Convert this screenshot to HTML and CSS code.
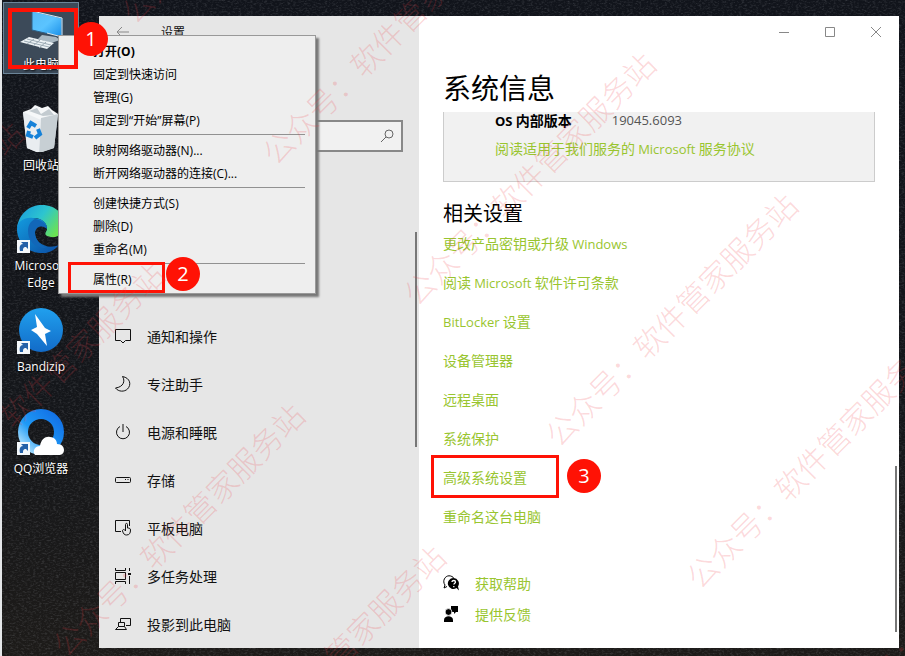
FILE: index.html
```html
<!DOCTYPE html>
<html lang="zh-CN">
<head>
<meta charset="utf-8">
<meta name="viewport" content="width=device-width, initial-scale=1">
<title>设置</title>
<link rel="stylesheet" href="styles.css">
</head>
<body>
<div class="desktop">
  <svg class="grain" aria-hidden="true">
    <filter id="noise"><feTurbulence type="fractalNoise" baseFrequency="0.35 0.6" numOctaves="3" seed="4"/><feColorMatrix values="0 0 0 0 .5  0 0 0 0 .52  0 0 0 0 .56  1.6 0 0 0 -.72"/></filter>
    <rect width="100%" height="100%" filter="url(#noise)"/>
  </svg>

  <aside class="shortcuts">
    <a class="shortcut selected" href="#">
      <svg class="glyph" width="48" height="48" viewBox="0 -6 48 48" aria-hidden="true">
        <defs><linearGradient id="scr" x1="0" y1="0" x2="1" y2="1"><stop offset="0" stop-color="#56b9f5"/><stop offset=".5" stop-color="#5bc4ff"/><stop offset="1" stop-color="#168de8"/></linearGradient></defs>
        <path d="M15 2l30 7v19l-30-7z" fill="url(#scr)" stroke="#2e5f85"/>
        <path d="M15 2l30 7v19l-15-4" fill="none" stroke="#dce6ee"/>
        <path d="M25 26l14 2 4 3-9 3-13-4z" fill="#a9b8c2"/>
        <path d="M12 28l25 6-7 6-27-7z" fill="#edf3f6"/>
        <path d="M10 30l24 6M7 32l25 6M17 30l-7 5M23 31l-7 6M29 33l-7 6" stroke="#9baab4"/>
      </svg>
      <span>此电脑</span>
      <i class="callout callout-pc"></i><b class="badge badge-pc">1</b>
    </a>
    <a class="shortcut" href="#">
      <svg class="glyph" width="48" height="48" viewBox="0 0 48 48" aria-hidden="true">
        <path d="M6 8l4 36 12 5 15-5 4-34z" fill="#dbe1e5"/>
        <path d="M6 8l8-3 4-4 7 3 6-2 4 4 6 4-4 4-15 2-10-2z" fill="#f6f8f9"/>
        <path d="M12 7l8-3 4 6 8-5 5 6-11 1z" fill="#c3cbd0"/>
        <path d="M24 14l17-4-4 34-15 5z" fill="#c7cfd4"/>
        <path d="M6 8l4 36 12 5 2-33z" fill="#e9edf0"/>
        <g fill="none" stroke="#1581d8" stroke-width="4"><path d="M11 24l3-5 5 3"/><path d="M21 25l2 5-5 4"/><path d="M16 33l-5-2 1-4"/></g>
      </svg>
      <span>回收站</span>
    </a>
    <a class="shortcut" href="#">
      <svg class="glyph" width="48" height="48" viewBox="0 0 48 48" aria-hidden="true">
        <defs><linearGradient id="eg" x1="0" y1="0" x2="1" y2=".5"><stop offset="0" stop-color="#1797df"/><stop offset=".55" stop-color="#2dc5cf"/><stop offset="1" stop-color="#6be252"/></linearGradient><linearGradient id="eb" x1="0" y1="0" x2="1" y2="1"><stop offset="0" stop-color="#139bde"/><stop offset="1" stop-color="#0b4da4"/></linearGradient></defs>
        <path d="M0 23C2 8 13 0 25 0c14 0 23 10 23 20 0 8-7 13-14 12-6-1-7-3-4-7 1-6-5-12-13-12-9 0-15 5-17 10z" fill="url(#eg)"/>
        <path d="M0 24c0-8 8-12 16-11 8 0 14 4 14 10-4-5-12-3-12 5 0 10 12 17 24 12-6 7-13 9-19 8C10 47 0 37 0 24z" fill="url(#eb)"/>
        <path d="M18 14c6 1 12 5 12 10-5-5-12-2-12 4 0 6 5 12 11 15-12 0-18-8-18-17 0-6 3-10 7-12z" fill="#1267b8"/>
        <rect y="35" width="13" height="13" fill="#f4f8fb"/><path d="M3 46c-1-4 0-7 3-7L4 37h7v7l-2-2c-3 0-3 2-3 4z" fill="#2461a8"/>
      </svg>
      <span class="en">Microsoft<br>Edge</span>
    </a>
    <a class="shortcut" href="#">
      <svg class="glyph" width="48" height="48" viewBox="0 0 48 48" aria-hidden="true">
        <defs><linearGradient id="bz" x1="0" y1="0" x2="0" y2="1"><stop offset="0" stop-color="#20a0ee"/><stop offset="1" stop-color="#126bc8"/></linearGradient></defs>
        <circle cx="24" cy="24" r="22" fill="url(#bz)"/>
        <path d="M18 8l10 14 6 3-6 3 2 12-10-12-6-4 6-3z" fill="#fff"/>
        <rect y="35" width="13" height="13" fill="#f4f8fb"/><path d="M3 46c-1-4 0-7 3-7L4 37h7v7l-2-2c-3 0-3 2-3 4z" fill="#2461a8"/>
      </svg>
      <span class="en">Bandizip</span>
    </a>
    <a class="shortcut" href="#">
      <svg class="glyph" width="48" height="48" viewBox="0 0 48 48" aria-hidden="true">
        <defs><linearGradient id="qq" x1="1" y1="0" x2="0" y2="1"><stop offset="0" stop-color="#126ee5"/><stop offset=".6" stop-color="#1e9af6"/><stop offset="1" stop-color="#bfe9ff"/></linearGradient></defs>
        <circle cx="24" cy="25" r="18" fill="none" stroke="url(#qq)" stroke-width="10"/>
        <path d="M18 48c-3-4 0-9 5-9 1-7 6-10 10-9 5 0 7 4 7 7 5 0 7 3 7 6 0 4-3 5-5 5z" fill="#fff"/>
        <rect y="35" width="13" height="13" fill="#f4f8fb"/><path d="M3 46c-1-4 0-7 3-7L4 37h7v7l-2-2c-3 0-3 2-3 4z" fill="#2461a8"/>
      </svg>
      <span><span class="en">QQ</span>浏览器</span>
    </a>
  </aside>

  <div class="window">
    <section class="sidebar">
      <header class="side-head">
        <button class="back" aria-label="返回"><svg width="14" height="12" viewBox="0 0 14 12"><path d="M13 6H1M6 1L1 6l5 5"/></svg></button>
        <span>设置</span>
      </header>
      <label class="search"><input type="search" aria-label="查找设置"><svg width="16" height="16" viewBox="0 0 16 16" aria-hidden="true"><circle cx="10" cy="6" r="4"/><path d="M7 9l-5 5"/></svg></label>
      <nav class="nav">
        <a href="#"><svg width="16" height="16" viewBox="0 0 16 16"><path d="M.5 1.5h15v11h-5L8 15l-2.500-2.500h-5z"/></svg>通知和操作</a>
        <a href="#"><svg width="16" height="16" viewBox="0 0 16 16"><path d="M7.500.5C10.500 5 8.500 11 .5 12c3 4 9 4 12 1 4-4 3-11-5-12.500z"/></svg>专注助手</a>
        <a href="#"><svg width="16" height="16" viewBox="0 0 16 16"><path d="M8 0v8M5 2.500a6.500 6.500 0 1 0 6 0"/></svg>电源和睡眠</a>
        <a href="#"><svg width="16" height="16" viewBox="0 0 16 16"><rect x=".5" y="5.500" width="15" height="5" rx="1"/><path d="M10 7.500h1M12.500 7.500h1"/></svg>存储</a>
        <a href="#"><svg width="16" height="16" viewBox="0 0 16 16"><path d="M6 11.500H.5V.5h14V6M10.500 11V4.500c0-1.500 2-1.500 2 0V8c2 0 3 .5 3 2 0 3-1 5-4 5-2 0-3-1-4-4 0-2 2-2 3 0"/></svg>平板电脑</a>
        <a href="#"><svg width="16" height="16" viewBox="0 0 16 16"><path d="M.5 0v2.500h10V0M.5 4.500h10v7H.5zM.5 16v-2.500h10V16M14.500 0v3M14.500 8v8"/><path d="M13 5h3v2h-3z" fill="#111" stroke="none"/></svg>多任务处理</a>
        <a href="#"><svg width="16" height="16" viewBox="0 0 16 16"><path d="M5.500 6V2.500h10v7H11M3.500 6.500h6v4h-6zM3.500 10.500l-3 3h11l-2-3"/></svg>投影到此电脑</a>
      </nav>
      <i class="thumb thumb-side"></i>
    </section>

    <main class="content">
      <div class="controls">
        <button aria-label="最小化"><svg width="12" height="12" viewBox="0 0 12 12"><path d="M1 6.500h10"/></svg></button>
        <button aria-label="最大化"><svg width="12" height="12" viewBox="0 0 12 12"><path d="M1.500 1.500h9v9h-9z"/></svg></button>
        <button aria-label="关闭"><svg width="12" height="12" viewBox="0 0 12 12"><path d="M1 1l10 10M11 1L1 11"/></svg></button>
      </div>
      <h1>系统信息</h1>
      <div class="panel">
        <dl><dt><span class="en">OS</span> 内部版本</dt><dd class="en">19045.6093</dd></dl>
        <a href="#">阅读适用于我们服务的 <span class="en">Microsoft</span> 服务协议</a>
      </div>
      <h2>相关设置</h2>
      <ul class="links">
        <li><a href="#">更改产品密钥或升级 <span class="en">Windows</span></a></li>
        <li><a href="#">阅读 <span class="en">Microsoft</span> 软件许可条款</a></li>
        <li><a href="#"><span class="en">BitLocker</span> 设置</a></li>
        <li><a href="#">设备管理器</a></li>
        <li><a href="#">远程桌面</a></li>
        <li><a href="#">系统保护</a></li>
        <li><a href="#">高级系统设置</a><i class="callout callout-adv"></i><b class="badge badge-adv">3</b></li>
        <li><a href="#">重命名这台电脑</a></li>
      </ul>
      <ul class="help">
        <li><svg width="16" height="16" viewBox="0 0 16 16" aria-hidden="true"><path d="M4 11.500L1 13l1-3C-1 6 2 .8 6 .8c2 0 4 1 5 2.500" fill="none" stroke="#000"/><path d="M10.500 3a5.500 5.500 0 1 0 3 10l2.500 2.500-1-4A5.500 5.500 0 0 0 10.500 3z"/><path d="M9 7c0-2 3.500-2 3.500 0 0 1.200-1.700 1.200-1.700 2.600M10.800 11v1.200" fill="none" stroke="#fff" stroke-width="1.300"/></svg><a href="#">获取帮助</a></li>
        <li><svg width="16" height="16" viewBox="0 0 16 16" aria-hidden="true"><path d="M8 0h7v6h-2l-2 2V6H8z"/><circle cx="5.500" cy="6" r="3.400" stroke="#fff" stroke-width=".8"/><path d="M1 16v-2c0-5 9-5 9 0v2z"/></svg><a href="#">提供反馈</a></li>
      </ul>
      <i class="thumb thumb-main"></i>
    </main>
  </div>

  <div class="menu" role="menu">
    <button role="menuitem" class="default">打开<span class="en">(O)</span></button>
    <button role="menuitem">固定到快速访问</button>
    <button role="menuitem">管理<span class="en">(G)</span></button>
    <button role="menuitem">固定到<span class="en">“</span>开始<span class="en">”</span>屏幕<span class="en">(P)</span></button>
    <hr>
    <button role="menuitem">映射网络驱动器<span class="en">(N)...</span></button>
    <button role="menuitem">断开网络驱动器的连接<span class="en">(C)...</span></button>
    <hr>
    <button role="menuitem">创建快捷方式<span class="en">(S)</span></button>
    <button role="menuitem">删除<span class="en">(D)</span></button>
    <button role="menuitem">重命名<span class="en">(M)</span></button>
    <hr>
    <button role="menuitem">属性<span class="en">(R)</span><i class="callout callout-prop"></i><b class="badge badge-prop">2</b></button>
  </div>

  <svg class="watermark" aria-hidden="true">
    <g>
      <text transform="translate(133 26) rotate(-45)">公众号：软件管家服务站</text>
      <text transform="translate(274 167) rotate(-45)">公众号：软件管家服务站</text>
      <text transform="translate(415 308) rotate(-45)">公众号：软件管家服务站</text>
      <text transform="translate(557 449) rotate(-45)">公众号：软件管家服务站</text>
      <text transform="translate(698 591) rotate(-45)">公众号：软件管家服务站</text>
      <text transform="translate(840 733) rotate(-45)">公众号：软件管家服务站</text>
      <text transform="translate(-217 377) rotate(-45)">公众号：软件管家服务站</text>
      <text transform="translate(-76 518) rotate(-45)">公众号：软件管家服务站</text>
      <text transform="translate(64 659) rotate(-45)">公众号：软件管家服务站</text>
      <text transform="translate(205 801) rotate(-45)">公众号：软件管家服务站</text>
    </g>
  </svg>
</div>
</body>
</html>
```
FILE: styles.css
```css
* { box-sizing: border-box; }

body {
  margin: 0;
  font-family: "Noto Sans CJK SC", "Open Sans", sans-serif;
  font-size: 14px;
  line-height: 20px;
  color: #111;
}

a { color: inherit; text-decoration: none; }
ul, dl, dd { margin: 0; padding: 0; list-style: none; }
button { border: 0; padding: 0; background: none; font: inherit; color: inherit; }
svg { flex: none; }
.en { font-family: "Open Sans", sans-serif; font-size: 13px; line-height: 1; }

.desktop {
  position: relative;
  display: grid;
  grid-template-columns: 97px 1fr;
  min-height: 100vh;
  padding: 0 6px 8px 0;
  border-left: 2px solid #e4e6e8;
  background: linear-gradient(#11141b, #14161a 60%, #1d1b19);
  overflow: hidden;
}

.grain { position: absolute; inset: 0; width: 100%; height: 100%; opacity: .25; }

/* Desktop shortcuts */
.shortcuts {
  position: relative;
  display: flex;
  flex-direction: column;
  gap: 31px;
  padding: 3px 0 0 2px;
}

.shortcut {
  position: relative;
  display: flex;
  flex-direction: column;
  align-items: center;
  gap: 4px;
  width: 74px;
  height: 70px;
  font-size: 12px;
  line-height: 17px;
  color: #fff;
  text-align: center;
  text-shadow: 1px 1px 2px #000;
  white-space: nowrap;
}

.shortcut .en { font-size: 12px; line-height: 17px; }
.shortcut.selected { background: #3c4a59; outline: 1px solid #6c8599; }

/* Settings window */
.window {
  position: relative;
  display: grid;
  grid-template-columns: 320px 1fr;
  margin-top: 16px;
  background: #fff;
}

.sidebar { position: relative; background: #e6e6e6; }

.side-head {
  display: flex;
  align-items: center;
  gap: 31px;
  height: 32px;
  padding-left: 17px;
  font-size: 12px;
}

.back { display: flex; }
.back svg, .controls svg { fill: none; stroke: #888; }

.search {
  display: flex;
  align-items: center;
  height: 32px;
  margin: 72px 16px 0;
  padding-right: 6px;
  border: 2px solid #888;
  background: #f1f1f1;
}

.search input { flex: 1; min-width: 0; border: 0; outline: 0; background: none; }
.search svg { fill: none; stroke: #666; }

.nav { margin-top: 160px; }
.nav a { display: flex; align-items: center; gap: 16px; height: 48px; padding-left: 16px; }
.nav svg { fill: none; stroke: #111; }

.content { position: relative; padding: 0 24px; }
.controls { display: flex; justify-content: flex-end; margin-right: -24px; }
.controls button { display: grid; place-items: center; width: 46px; height: 32px; }

h1 { margin: 19px 0 5px; font-size: 28px; line-height: 40px; font-weight: 400; color: #000; }
h2 { margin: 17px 0 6px; font-size: 20px; line-height: 28px; font-weight: 400; color: #000; }

.panel {
  padding: 0 0 23px 51px;
  border: solid #ccc;
  border-width: 0 1px 1px;
  background: #f1f1f1;
}

.panel dl { display: flex; gap: 40px; margin-bottom: 10px; line-height: 16px; }
.panel dt { font-weight: 700; color: #000; }
.panel dd { line-height: 16px; color: #555; }
.panel a { display: block; }
.panel a, .links, .help { color: #99c52f; }

.links { display: grid; gap: 19px; }
.links li { position: relative; }
.help { display: grid; gap: 11px; margin-top: 47px; }
.help li { display: flex; align-items: center; gap: 16px; }

.thumb { position: absolute; width: 2px; background: #777; }
.thumb-side { top: 216px; right: 2px; height: 215px; }
.thumb-main { top: 450px; right: 2px; height: 166px; }

/* Context menu */
.menu {
  position: absolute;
  top: 35px;
  left: 56px;
  width: 258px;
  padding: 3px 2px;
  border: 1px solid #999;
  background: #eee;
  box-shadow: 3px 3px 2px #777;
}

.menu button {
  position: relative;
  display: block;
  width: 100%;
  padding-left: 32px;
  font-size: 12px;
  line-height: 23px;
  text-align: left;
  color: #000;
}

.menu .en { font-size: 12px; }
.menu .default, .menu .default .en { font-weight: 700; }
.menu hr { height: 1px; margin: 3px 8px; border: 0; background: #919191; }

/* Numbered step marks */
.callout { position: absolute; border: 3px solid #ff1205; }

.badge {
  position: absolute;
  width: 34px;
  height: 34px;
  border-radius: 50%;
  background: #ff1205;
  font: 400 20px/34px "Open Sans", sans-serif;
  color: #fff;
  text-align: center;
  text-shadow: none;
}

.callout-pc { top: 5px; left: 4px; width: 70px; height: 61px; border-width: 4px; }
.badge-pc { top: 19px; left: 70px; }
.callout-prop { top: -5px; left: 7px; width: 97px; height: 31px; }
.badge-prop { top: -10px; left: 105px; }
.callout-adv { top: -12px; left: -12px; width: 128px; height: 43px; }
.badge-adv { top: -8px; left: 124px; }

/* The shortcut's marks sit above the open menu; its label stays below */
.menu { z-index: 1; }
.callout-pc, .badge-pc { z-index: 2; }

.watermark {
  position: absolute;
  inset: 0;
  z-index: 3;
  width: 100%;
  height: 100%;
  pointer-events: none;
}

.watermark text { font-size: 31px; font-weight: 300; fill: #f03c46; fill-opacity: .2; }
```
